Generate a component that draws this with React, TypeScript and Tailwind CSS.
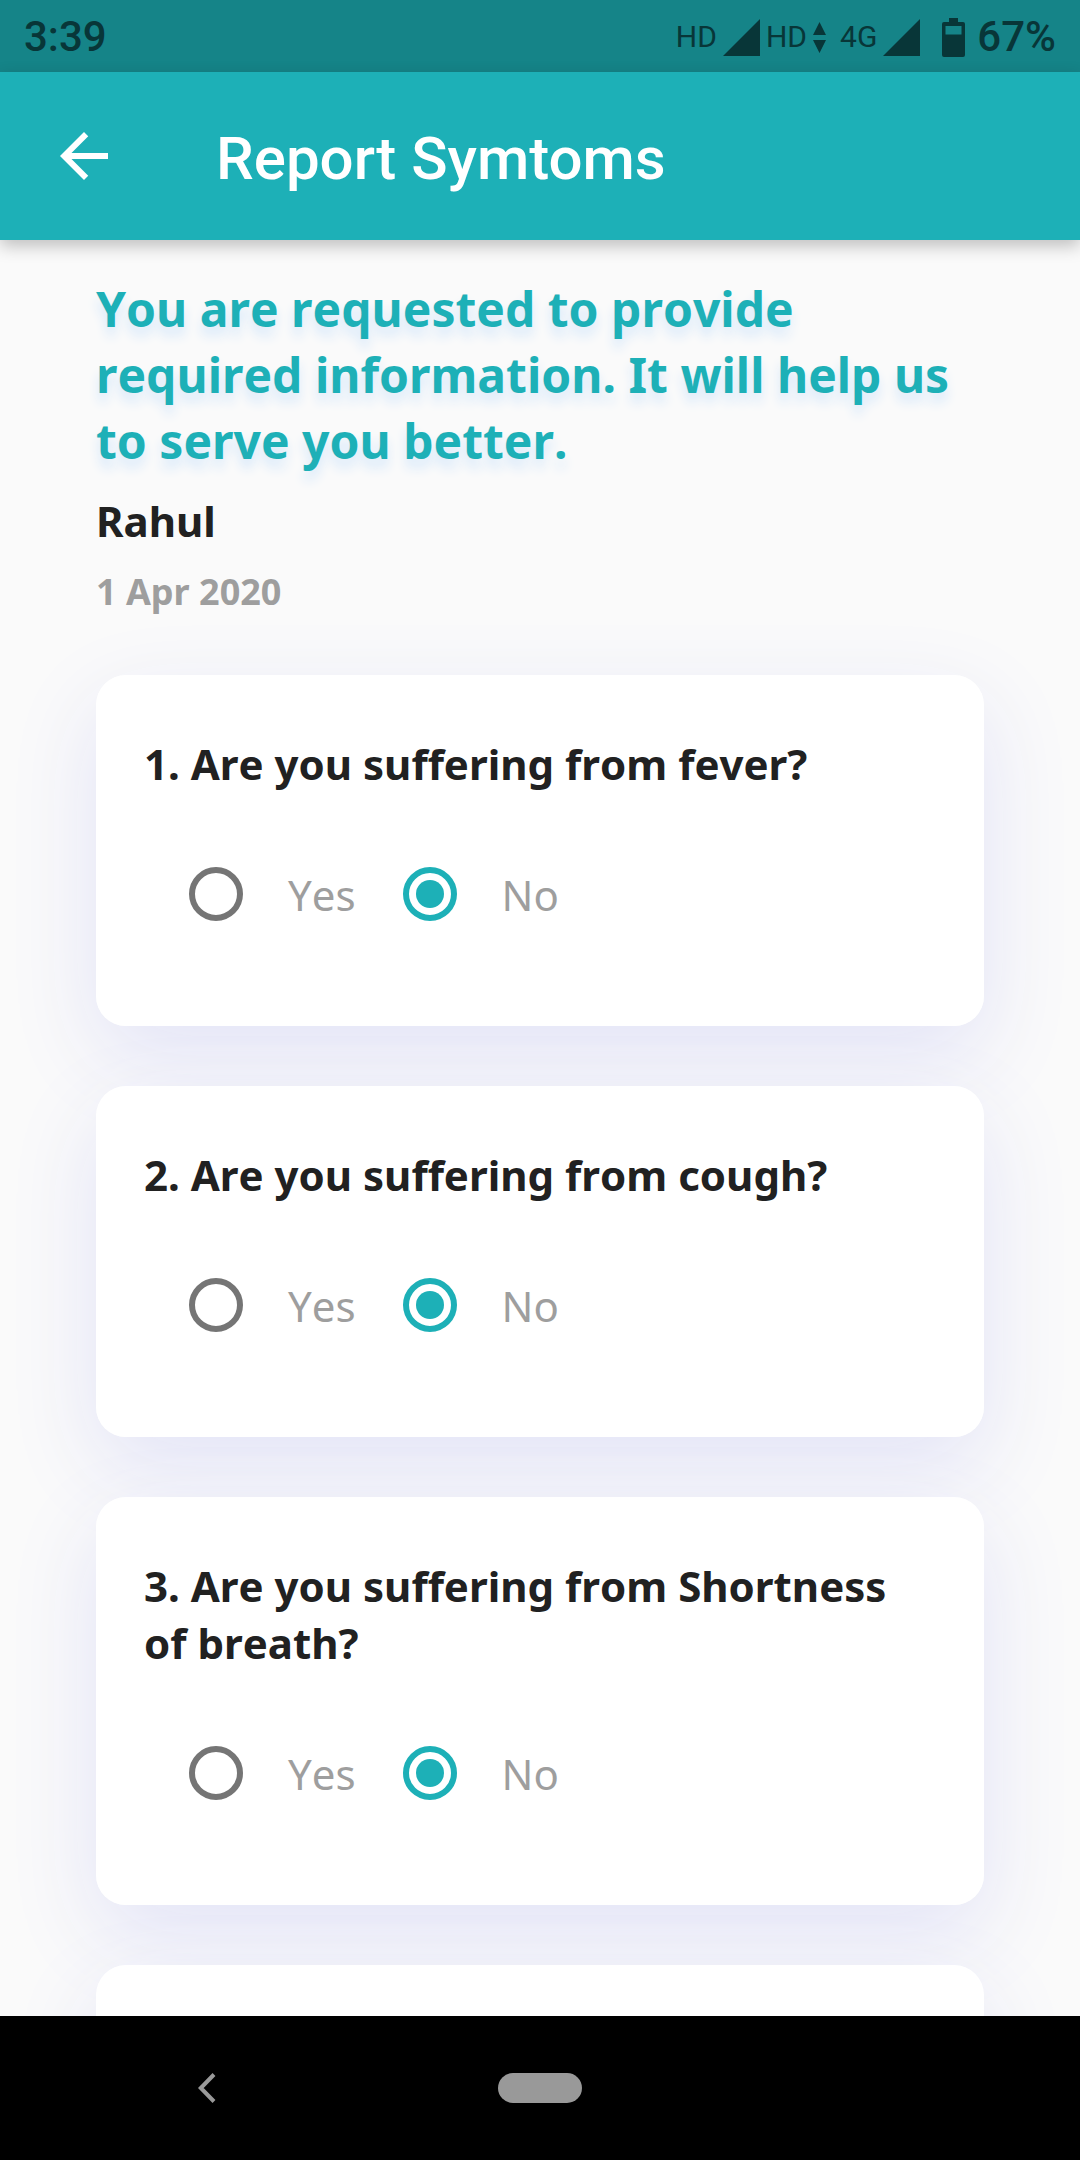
import React, { useState } from "react";
import { MdArrowBack } from "react-icons/md";

type Answer = "Yes" | "No";

interface Question {
  id: number;
  text: string;
}

const questions: Question[] = [
  { id: 1, text: "Are you suffering from fever?" },
  { id: 2, text: "Are you suffering from cough?" },
  { id: 3, text: "Are you suffering from Shortness of breath?" },
];

const options: Answer[] = ["Yes", "No"];

const SignalIcon: React.FC = () => (
  <svg className="w-[37px] h-[37px]" viewBox="0 0 37 37" fill="currentColor">
    <path d="M37 0v37H0z" />
  </svg>
);

const DataArrowsIcon: React.FC = () => (
  <svg className="w-[13px] h-[31px]" viewBox="0 0 13 31" fill="currentColor">
    <path d="M6.5 0 13 13H0zM0 18h13L6.5 31z" />
  </svg>
);

const BatteryIcon: React.FC = () => (
  <svg className="w-[23px] h-[39px]" viewBox="0 0 23 39" fill="currentColor">
    <path
      fillRule="evenodd"
      d="M7 0h9v4h5a2 2 0 0 1 2 2v31a2 2 0 0 1-2 2H2a2 2 0 0 1-2-2V6a2 2 0 0 1 2-2h5zM3.5 8v8.500h16V8z"
    />
  </svg>
);

const StatusBar: React.FC = () => (
  <div className="h-[72px] shrink-0 px-6 pt-0.5 flex items-center justify-between bg-[#158488] text-[#083638] text-[42px] font-medium leading-[48px]">
    <span>3:39</span>
    <div className="flex items-center">
      <div className="flex items-center gap-1.5 text-[30px] font-normal">
        <span>HD</span>
        <SignalIcon />
        <span>HD</span>
        <DataArrowsIcon />
        <span className="ml-2">4G</span>
        <SignalIcon />
      </div>
      <span className="ml-[22px] mr-3">
        <BatteryIcon />
      </span>
      <span>67%</span>
    </div>
  </div>
);

const AppBar: React.FC = () => (
  <header className="relative z-10 h-[168px] shrink-0 px-12 flex items-center gap-24 bg-[#1db0b7] text-white shadow-[0_6px_16px_rgba(0,0,0,0.24)]">
    <button type="button" aria-label="Back">
      <MdArrowBack className="w-[72px] h-[72px]" />
    </button>
    <h1 className="pt-1.5 text-[60px] leading-[72px] font-medium">
      Report Symtoms
    </h1>
  </header>
);

const cardClass =
  "rounded-[30px] bg-white shadow-[0_30px_90px_#e2e3f7] px-12 py-[60px]";

type QuestionCardProps = { question: Question };

const QuestionCard: React.FC<QuestionCardProps> = ({ question }) => {
  const [answer, setAnswer] = useState<Answer>("No");

  return (
    <fieldset className={cardClass}>
      <legend className="float-left w-full mb-[30px] text-[42px] leading-[57px] font-bold text-[#212121]">
        {`${question.id}. ${question.text}`}
      </legend>
      <div className="clear-both flex items-center gap-0.5 text-[42px] leading-[57px] text-[#9e9e9e]">
        {options.map((option) => (
          <label key={option} className="h-36 flex items-center">
            <input
              type="radio"
              name={`question-${question.id}`}
              value={option}
              checked={answer === option}
              onChange={() => setAnswer(option)}
              className="appearance-none w-[54px] h-[54px] mx-[45px] grid place-items-center rounded-full border-6 border-[#757575] checked:border-[#1db0b7] checked:before:content-[''] checked:before:w-7 checked:before:h-7 checked:before:rounded-full checked:before:bg-[#1db0b7]"
            />
            {option}
          </label>
        ))}
      </div>
    </fieldset>
  );
};

const NavigationBar: React.FC = () => (
  <nav className="h-36 shrink-0 grid grid-cols-[1fr_auto_1fr] items-center bg-black text-[#999999]">
    <div className="pl-[162px]">
      <button
        type="button"
        aria-label="System back"
        className="w-[90px] h-[90px] flex items-center justify-center"
      >
        <svg
          className="w-[18px] h-[30px]"
          viewBox="0 0 18 30"
          fill="none"
          stroke="currentColor"
          strokeWidth="4"
        >
          <path d="M16 1.500 2.800 15 16 28.500" />
        </svg>
      </button>
    </div>
    <button
      type="button"
      aria-label="Home"
      className="w-[84px] h-[30px] rounded-full bg-[#999999]"
    />
  </nav>
);

const App: React.FC = () => {
  return (
    <div className="h-screen flex flex-col bg-[#fafafa] font-['Roboto',sans-serif]">
      <StatusBar />
      <AppBar />
      <main className="flex-1 min-h-0 overflow-y-auto [scrollbar-width:none] px-24 pt-9 font-['Noto_Sans',sans-serif] [font-kerning:none]">
        <h2 className="text-[48px] leading-[66px] font-bold text-[#1db0b7] [text-shadow:0_9px_12px_#d6e8fa]">
          You are requested to provide required information. It will help us to
          serve you better.
        </h2>
        <p className="mt-[18px] text-[42px] leading-[57px] font-bold text-[#212121]">
          Rahul
        </p>
        <p className="mt-[18px] text-[36px] leading-[49px] font-bold text-[#9e9e9e]">
          1 Apr 2020
        </p>
        <form className="mt-[59px] pb-[60px] flex flex-col gap-[60px]">
          {questions.map((question) => (
            <QuestionCard key={question.id} question={question} />
          ))}
          <div className={cardClass} />
        </form>
      </main>
      <NavigationBar />
    </div>
  );
};

export default App;
